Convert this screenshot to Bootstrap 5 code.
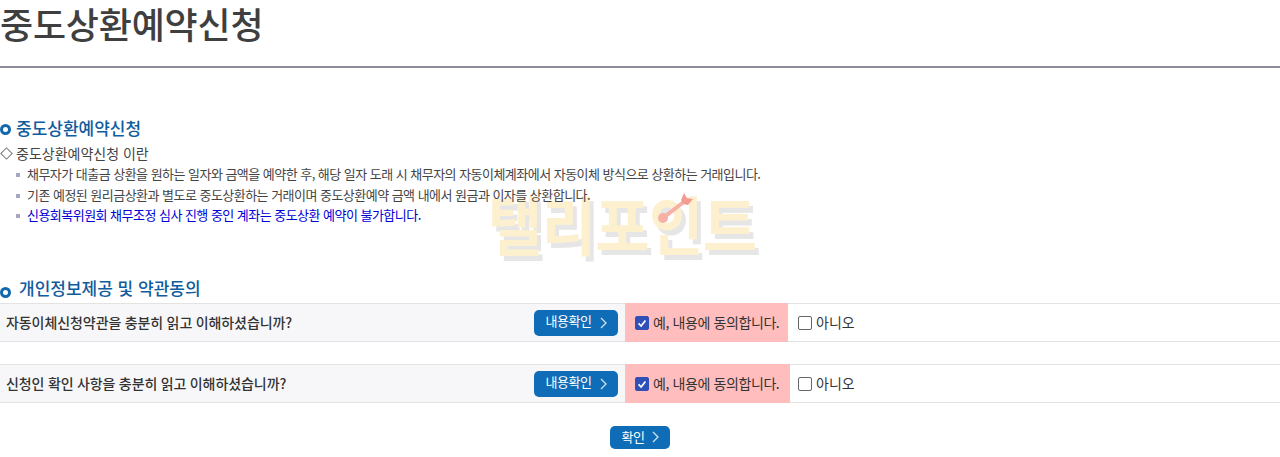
<!DOCTYPE html>
<html lang="ko"><head><meta charset="utf-8"><title>중도상환예약신청</title>
<link href="https://cdn.jsdelivr.net/npm/bootstrap@5.3.0/dist/css/bootstrap.min.css" rel="stylesheet">
<style>
html,body{height:457px;overflow:hidden}
body{font-family:"Noto Sans CJK KR","Liberation Sans",sans-serif;color:#333;background:#fff;position:relative}
.page-title{height:68px;margin:0;border-bottom:2px solid #8d8d99;font-size:36px;font-weight:500;line-height:46px;color:#3f3f3f;letter-spacing:-.2px}
.sect-head{color:#0f5c9e;font-size:17px;font-weight:500;line-height:24px;letter-spacing:0;margin:0}
.sect-one{margin-top:48px;padding-left:16px;position:relative}
.sect-two{margin-top:50px;padding-left:19px;position:relative}
.ring{position:absolute;left:0;width:11px;height:11px;border:3px solid #1268ad;border-radius:50%}
.sect-one .ring{top:8px}.sect-two .ring{top:11px}
.intro{font-size:14px;line-height:20px;letter-spacing:0;color:#444;margin-top:3px;display:flex;align-items:center}
.diamond{width:9px;height:9px;border:1px solid #777;transform:rotate(45deg);margin:0 5px 0 2px;flex:none}
.notes{list-style:none;margin:1px 0 0;padding:0 0 0 16px;font-size:13px;line-height:20.5px;letter-spacing:-.53px;color:#444;position:relative;z-index:1}
.notes li{position:relative;padding-left:11px}
.notes li::before{content:"";position:absolute;left:0;top:9px;width:4px;height:4px;background:#a6a6c0}
.notes .warn{color:#0000d6}
.agree{height:39px;border-top:1px solid #e3e3e3;border-bottom:1px solid #e3e3e3;font-size:14px;letter-spacing:-.4px;color:#333}
.agree+.agree{margin-top:22px}
.agree-first{margin-top:3px}
.q-cell{width:625px;background:#f7f7f9;padding:0 7px 0 6px;height:100%}
.q-text{font-weight:500;color:#333;font-size:14px;letter-spacing:-.07px;word-spacing:-.4px}
.go-btn{background:#0f6cb6;color:#fff;border:0;border-radius:5px;font-size:13px;font-weight:400;letter-spacing:-.4px;height:26px;width:84px;padding:0 0 6px;display:flex;align-items:center;justify-content:center;gap:8px;line-height:1;position:relative;top:1px}
.go-btn svg{margin-top:6px}
.yes-cell{background:#ffbdbd;width:163px;height:calc(100% + 2px);margin-top:-1px;padding-left:10px;gap:4px;margin-bottom:-1px}
.row-two .yes-cell{width:165px}
.no-cell{padding-left:10px;gap:4px;letter-spacing:0}
.row-two .no-cell{padding-left:8px}
.tick{appearance:none;width:14px;height:14px;border:1px solid #666;border-radius:2px;background:#fff;margin:1px 0 0;flex:none}
.tick:checked{background:#3050b8 url("data:image/svg+xml,%3Csvg xmlns='http://www.w3.org/2000/svg' viewBox='0 0 14 14'%3E%3Cpath d='M3 7.5l3 3 5-6.5' fill='none' stroke='%23fff' stroke-width='2'/%3E%3C/svg%3E");border-color:#3050b8}
.submit-wrap{margin-top:23px}
.submit-wrap .go-btn{width:60px;height:23px;padding:0 0 2px;gap:7px;margin:0 auto;top:0}
.submit-wrap .go-btn svg{margin-top:2px}
.mark-over{position:absolute;left:488px;top:185px;width:275px;height:80px;pointer-events:none}
.mark-text{position:absolute;left:0;top:0;font-size:59px;font-weight:700;line-height:80px;letter-spacing:-.6px;color:#fdf0cf;text-shadow:4px 5px 0 #e6e6e6;white-space:nowrap;transform:scaleY(1.08);transform-origin:0 85%}
.mark-over svg{position:absolute;left:163px;top:7px}
</style></head><body>
<h1 class="page-title">중도상환예약신청</h1>
<div class="sect-one"><span class="ring"></span><h2 class="sect-head">중도상환예약신청</h2></div>
<div class="intro"><span class="diamond"></span>중도상환예약신청 이란</div>
<ul class="notes">
<li>채무자가 대출금 상환을 원하는 일자와 금액을 예약한 후, 해당 일자 도래 시 채무자의 자동이체계좌에서 자동이체 방식으로 상환하는 거래입니다.</li>
<li>기존 예정된 원리금상환과 별도로 중도상환하는 거래이며 중도상환예약 금액 내에서 원금과 이자를 상환합니다.</li>
<li class="warn">신용회복위원회 채무조정 심사 진행 중인 계좌는 중도상환 예약이 불가합니다.</li>
</ul>
<div class="sect-two"><span class="ring"></span><h2 class="sect-head">개인정보제공 및 약관동의</h2></div>
<div class="agree agree-first d-flex align-items-center">
 <div class="q-cell d-flex align-items-center justify-content-between"><span class="q-text">자동이체신청약관을 충분히 읽고 이해하셨습니까?</span>
 <button type="button" class="btn go-btn">내용확인<svg width="7" height="12" viewBox="0 0 7 12"><path d="M1 1l5 5-5 5" fill="none" stroke="#cfe2f3" stroke-width="1.3"/></svg></button></div>
 <label class="yes-cell d-flex align-items-center"><input class="tick" type="checkbox" checked>예, 내용에 동의합니다.</label>
 <label class="no-cell d-flex align-items-center"><input class="tick" type="checkbox">아니오</label>
</div>
<div class="agree row-two d-flex align-items-center">
 <div class="q-cell d-flex align-items-center justify-content-between"><span class="q-text">신청인 확인 사항을 충분히 읽고 이해하셨습니까?</span>
 <button type="button" class="btn go-btn">내용확인<svg width="7" height="12" viewBox="0 0 7 12"><path d="M1 1l5 5-5 5" fill="none" stroke="#cfe2f3" stroke-width="1.3"/></svg></button></div>
 <label class="yes-cell d-flex align-items-center"><input class="tick" type="checkbox" checked>예, 내용에 동의합니다.</label>
 <label class="no-cell d-flex align-items-center"><input class="tick" type="checkbox">아니오</label>
</div>
<div class="submit-wrap"><button type="button" class="btn go-btn">확인<svg width="7" height="12" viewBox="0 0 7 12"><path d="M1 1l5 5-5 5" fill="none" stroke="#cfe2f3" stroke-width="1.3"/></svg></button></div>
<div class="mark-over"><span class="mark-text">탤리포인트</span>
<svg width="50" height="40" viewBox="0 0 50 40"><path d="M12 26L34 9" stroke="#f7b0a6" stroke-width="4"/><path d="M30 8l3-7 3 5 6 1-5 6-5-1z" fill="#f39c92"/><circle cx="12" cy="26" r="5" fill="#f7b0a6"/></svg></div>
</body></html>
